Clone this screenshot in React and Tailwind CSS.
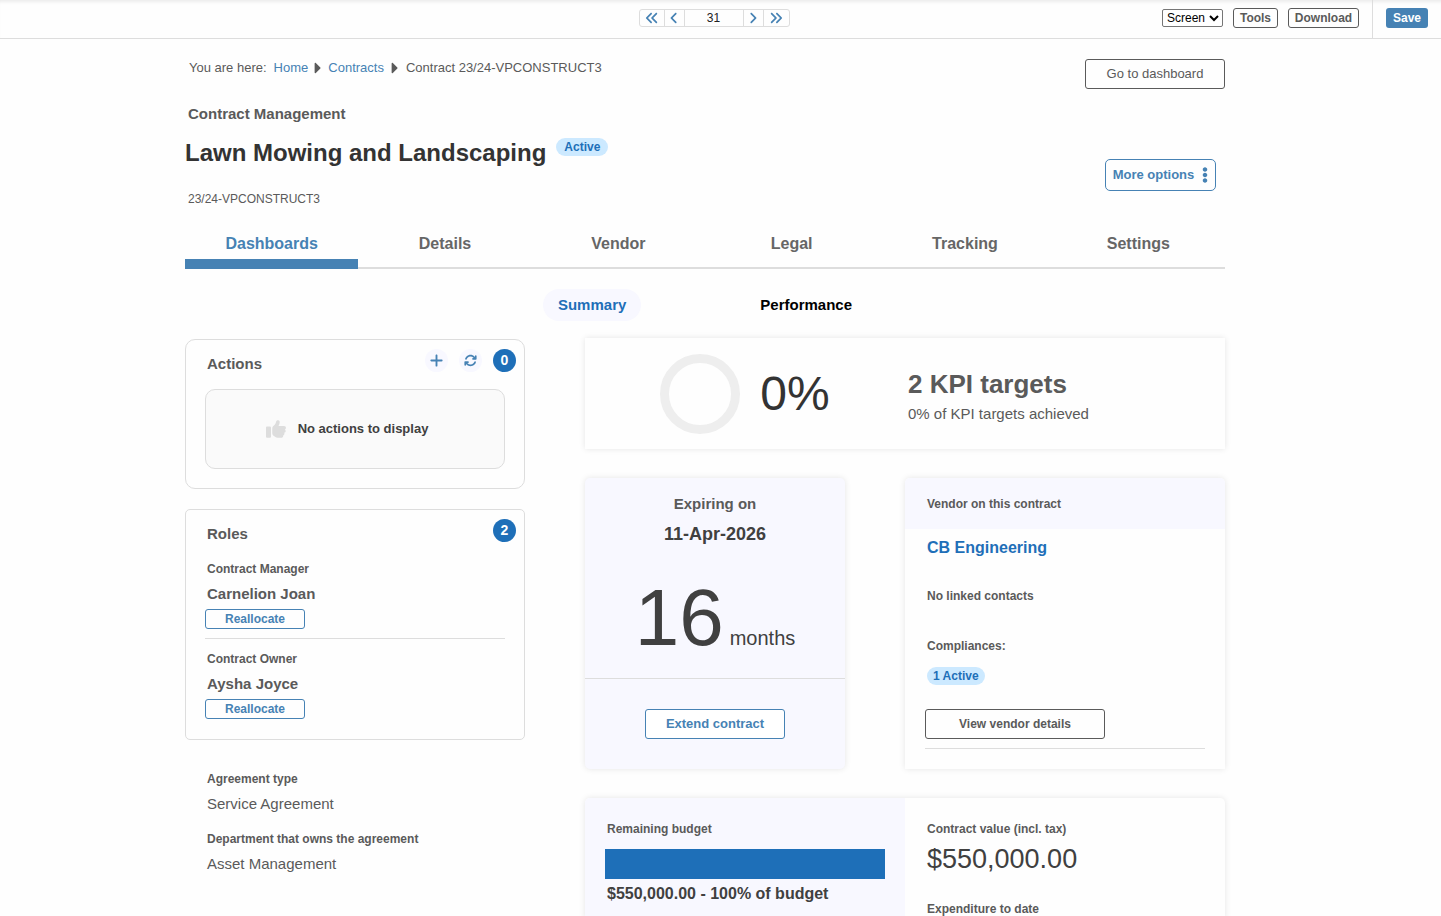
import { useState } from "react";
import { FaCaretRight, FaEllipsisV } from "react-icons/fa";
import {
  FaAngleLeft,
  FaAngleRight,
  FaAnglesLeft,
  FaAnglesRight,
  FaArrowsRotate,
  FaPlus,
  FaThumbsUp,
} from "react-icons/fa6";

const TABS = ["Dashboards", "Details", "Vendor", "Legal", "Tracking", "Settings"];

const ROLES = [
  { role: "Contract Manager", name: "Carnelion Joan" },
  { role: "Contract Owner", name: "Aysha Joyce" },
];

const AGREEMENT = [
  { label: "Agreement type", value: "Service Agreement" },
  { label: "Department that owns the agreement", value: "Asset Management" },
];

function App() {
  return (
    <div className="flex h-screen flex-col overflow-hidden bg-[#fefefe] font-['Liberation_Sans',Arial,sans-serif] text-[#5a5a5a]">
      <TopBar />
      <main className="mx-auto w-full max-w-[1071px] flex-1 pr-[31px]">
        <PageHeader />
        <Tabs />
        <SubTabs />
        <div className="mt-[18px] flex gap-15">
          <aside className="w-[340px] shrink-0">
            <ActionsCard />
            <RolesCard />
            <AgreementInfo />
          </aside>
          <div className="-mt-px min-w-0 flex-1">
            <KpiCard />
            <div className="mt-[29px] flex gap-15">
              <ExpiryCard />
              <VendorCard />
            </div>
            <BudgetCard />
          </div>
        </div>
      </main>
    </div>
  );
}

function TopBar() {
  const [page, setPage] = useState("31");

  return (
    <header className="grid h-[39px] shrink-0 grid-cols-[1fr_auto_1fr] border-b border-[#dddddd] pr-[13px] shadow-[inset_0_4px_4px_-3px_#e4e4e4]">
      <div />
      <nav
        aria-label="Records"
        className="mt-[9px] flex h-[18px] items-stretch divide-x divide-[#dddddd] rounded-[3px] border border-[#dddddd] text-[#4682b4]"
      >
        <button type="button" aria-label="First" className="flex w-[25px] items-center justify-center">
          <FaAnglesLeft className="size-[14px]" />
        </button>
        <button type="button" aria-label="Previous" className="flex w-5 items-center justify-center">
          <FaAngleLeft className="size-[14px]" />
        </button>
        <input
          aria-label="Record number"
          value={page}
          onChange={(event) => setPage(event.target.value)}
          className="w-[59px] text-center text-[12px] text-[#222222] outline-none"
        />
        <button type="button" aria-label="Next" className="flex w-5 items-center justify-center">
          <FaAngleRight className="size-[14px]" />
        </button>
        <button type="button" aria-label="Last" className="flex w-[25px] items-center justify-center">
          <FaAnglesRight className="size-[14px]" />
        </button>
      </nav>
      <div className="flex justify-end">
        <div className="flex items-start gap-[10px] pt-2 pr-[13px] text-[12px] font-bold">
          <select
            aria-label="View"
            defaultValue="Screen"
            className="mt-px h-[18px] w-[61px] rounded-[2px] border border-[#767676] bg-white font-normal text-black"
          >
            <option>Screen</option>
          </select>
          <button type="button" className="h-5 w-[45px] rounded-[3px] border border-[#5a5a5a] leading-[18px]">
            Tools
          </button>
          <button type="button" className="h-5 w-[71px] rounded-[3px] border border-[#5a5a5a] leading-[18px]">
            Download
          </button>
        </div>
        <div className="border-l border-[#dddddd] pt-2 pl-[13px]">
          <button
            type="button"
            className="block h-5 w-[42px] rounded-[3px] bg-[#4682b4] text-[12px] leading-5 font-bold text-white"
          >
            Save
          </button>
        </div>
      </div>
    </header>
  );
}

function PageHeader() {
  return (
    <div className="flex justify-between pt-5">
      <div>
        <nav aria-label="Breadcrumb" className="flex h-[18px] items-center pl-1 text-[13px] leading-[18px]">
          <span>You are here:</span>
          <a href="#home" className="ml-[7px] text-[#4682b4]">
            Home
          </a>
          <FaCaretRight className="mx-px size-[18px]" />
          <a href="#contracts" className="text-[#4682b4]">
            Contracts
          </a>
          <FaCaretRight className="mx-[2px] size-[18px]" />
          <span>Contract 23/24-VPCONSTRUCT3</span>
        </nav>
        <p className="mt-[27px] pl-[3px] text-[15px] leading-5 font-bold">Contract Management</p>
        <div className="mt-[14px] flex items-start gap-[10px]">
          <h1 className="text-[24px] leading-[30px] font-bold text-[#333333]">Lawn Mowing and Landscaping</h1>
          <span className="rounded-full bg-[#cce9ff] px-2 text-[12px] leading-[18px] font-bold text-[#1e6fb8]">
            Active
          </span>
        </div>
        <p className="mt-[21px] pl-[3px] text-[12px] leading-5">23/24-VPCONSTRUCT3</p>
      </div>
      <div className="flex flex-col items-end">
        <button
          type="button"
          className="h-[30px] w-[140px] rounded-[3px] border border-[#5a5a5a] text-[13px]"
        >
          Go to dashboard
        </button>
        <button
          type="button"
          className="mt-[70px] mr-[9px] flex h-8 w-[111px] items-center justify-center gap-2 rounded-[5px] border border-[#4682b4] text-[13px] font-bold text-[#4682b4]"
        >
          More options
          <FaEllipsisV className="h-4 w-[6px]" />
        </button>
      </div>
    </div>
  );
}

function Tabs() {
  return (
    <nav
      aria-label="Contract sections"
      className="mt-[10px] grid h-[50px] grid-cols-6 text-center text-[16px] font-bold text-[#666666]"
    >
      {TABS.map((tab, index) => (
        <a
          key={tab}
          href={`#${tab.toLowerCase()}`}
          className={
            index === 0
              ? "border-b-10 border-[#4682b4] pt-[15px] leading-5 text-[#4682b4]"
              : "border-b-2 border-[#dddddd] pt-[15px] leading-5"
          }
        >
          {tab}
        </a>
      ))}
    </nav>
  );
}

function SubTabs() {
  return (
    <nav
      aria-label="Dashboards"
      className="mt-5 flex justify-center gap-[104px] text-[15px] leading-8 font-bold"
    >
      <a href="#summary" className="rounded-full bg-[#f8f8ff] px-[15px] text-[#1e6fb8]">
        Summary
      </a>
      <a href="#performance" className="px-[15px] text-black">
        Performance
      </a>
    </nav>
  );
}

function CountBadge({ count }) {
  return (
    <span className="size-[23px] rounded-full bg-[#1e6fb8] text-center text-[14px] leading-[23px] font-bold text-white">
      {count}
    </span>
  );
}

function ActionsCard() {
  return (
    <section className="rounded-[10px] border border-[#dddddd] pb-[19px]">
      <div className="flex h-[49px] items-start justify-between pt-[9px] pr-2 pl-[21px]">
        <h2 className="text-[15px] leading-[30px] font-bold">Actions</h2>
        <div className="flex gap-[11px]">
          <button
            type="button"
            aria-label="Add action"
            className="flex size-[23px] items-center justify-center rounded-full bg-[#f8f8ff] text-[#4682b4]"
          >
            <FaPlus className="size-[15px]" />
          </button>
          <button
            type="button"
            aria-label="Refresh actions"
            className="flex size-[23px] items-center justify-center rounded-full bg-[#f8f8ff] text-[#4682b4]"
          >
            <FaArrowsRotate className="size-[13px]" />
          </button>
          <CountBadge count={0} />
        </div>
      </div>
      <div className="mx-[19px] flex h-20 items-center justify-center gap-3 rounded-[10px] border border-[#dddddd] bg-[#fafafa] pr-4">
        <FaThumbsUp className="size-5 text-[#dddddd]" />
        <p className="text-[13px] font-bold text-[#404040]">No actions to display</p>
      </div>
    </section>
  );
}

function RolesCard() {
  return (
    <section className="mt-5 rounded-[5px] border border-[#dddddd] pb-5">
      <div className="flex h-[49px] items-start justify-between pt-[9px] pr-2 pl-[21px]">
        <h2 className="text-[15px] leading-[30px] font-bold">Roles</h2>
        <CountBadge count={2} />
      </div>
      <ul className="mx-[19px] divide-y divide-[#dddddd]">
        {ROLES.map((item) => (
          <li key={item.role} className="not-first:pt-[10px] not-last:pb-[9px]">
            <p className="pl-[2px] text-[12px] leading-5 font-bold">{item.role}</p>
            <p className="pl-[2px] text-[15px] leading-[30px] font-bold">{item.name}</p>
            <button
              type="button"
              className="block h-5 w-[100px] rounded-[3px] border border-[#4682b4] text-[12px] leading-[18px] font-bold text-[#4682b4]"
            >
              Reallocate
            </button>
          </li>
        ))}
      </ul>
    </section>
  );
}

function AgreementInfo() {
  return (
    <dl className="mt-[29px] flex flex-col gap-[10px] pl-[22px]">
      {AGREEMENT.map((item) => (
        <div key={item.label}>
          <dt className="text-[12px] leading-5 font-bold">{item.label}</dt>
          <dd className="text-[15px] leading-[30px]">{item.value}</dd>
        </div>
      ))}
    </dl>
  );
}

function KpiCard() {
  return (
    <section className="grid h-[111px] grid-cols-2 items-center shadow-[0_0_6px_#0000001a]">
      <div className="flex items-center justify-center gap-5">
        <svg viewBox="0 0 80 80" className="size-20" aria-hidden="true">
          <circle cx="40" cy="40" r="35.5" fill="none" stroke="#eeeeee" strokeWidth="9" />
        </svg>
        <span className="text-[48px] leading-none text-[#333333]">0%</span>
      </div>
      <div className="pt-[10px] pl-[3px]">
        <h2 className="text-[26px] leading-[30px] font-bold">2 KPI targets</h2>
        <p className="text-[15px] leading-[30px]">0% of KPI targets achieved</p>
      </div>
    </section>
  );
}

function ExpiryCard() {
  return (
    <section className="w-[260px] shrink-0 rounded-[5px] bg-[#f8f8ff] pt-[11px] pb-[30px] text-center shadow-[0_0_6px_#0000001a]">
      <p className="text-[15px] leading-[30px] font-bold">Expiring on</p>
      <p className="text-[18px] leading-[30px] font-bold text-[#404040]">11-Apr-2026</p>
      <p className="mt-[29px] flex items-baseline justify-center gap-[6px] pb-5 text-[#404040]">
        <span className="text-[80px] leading-20">16</span>
        <span className="text-[20px]">months</span>
      </p>
      <div className="border-t border-[#dddddd] pt-[30px]">
        <button
          type="button"
          className="h-[30px] w-[140px] rounded-[3px] border border-[#4682b4] bg-white text-[13px] font-bold text-[#4682b4]"
        >
          Extend contract
        </button>
      </div>
    </section>
  );
}

function VendorCard() {
  return (
    <section className="min-w-0 flex-1 rounded-t-[5px] text-[12px] leading-5 font-bold shadow-[0_0_6px_#0000001a]">
      <h2 className="rounded-t-[5px] bg-[#f8f8ff] pt-4 pb-[15px] pl-[22px]">Vendor on this contract</h2>
      <div className="px-5 pt-1">
        <div className="pl-[2px]">
          <a href="#vendor" className="text-[16px] leading-[30px] text-[#1e6fb8]">
            CB Engineering
          </a>
          <p className="mt-[23px]">No linked contacts</p>
          <p className="mt-[30px]">Compliances:</p>
          <span className="mt-[11px] inline-block rounded-full bg-[#cce9ff] px-[6px] leading-[18px] text-[#1e6fb8]">
            1 Active
          </span>
        </div>
        <button type="button" className="mt-[23px] block h-[30px] w-[180px] rounded-[3px] border border-[#5a5a5a]">
          View vendor details
        </button>
        <hr className="mt-[9px] border-[#dddddd]" />
      </div>
    </section>
  );
}

function BudgetCard() {
  return (
    <section className="mt-[29px] grid grid-cols-2 rounded-t-[5px] shadow-[0_0_6px_#0000001a]">
      <div className="rounded-tl-[5px] bg-[#f8f8ff] px-5 pt-[21px]">
        <h2 className="pl-[2px] text-[12px] leading-5 font-bold">Remaining budget</h2>
        <div role="img" aria-label="100% of budget remaining" className="mt-[10px] h-[30px] bg-[#1e6fb8]" />
        <p className="pl-[2px] text-[16px] leading-[30px] font-bold text-[#404040]">
          $550,000.00 - 100% of budget
        </p>
      </div>
      <dl className="pt-[21px] pl-[22px]">
        <dt className="text-[12px] leading-5 font-bold">Contract value (incl. tax)</dt>
        <dd className="mb-5 text-[27px] leading-10 text-[#404040]">$550,000.00</dd>
        <dt className="text-[12px] leading-5 font-bold">Expenditure to date</dt>
      </dl>
    </section>
  );
}

export default App;
